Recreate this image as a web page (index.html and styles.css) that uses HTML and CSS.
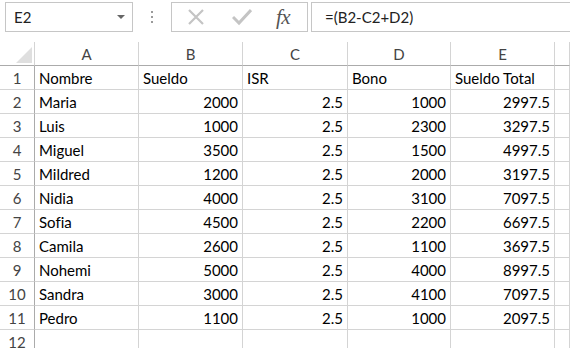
FILE: index.html
```html
<!DOCTYPE html>
<html lang="es">
<head>
  <meta charset="UTF-8" />
  <title>Hoja de sueldos</title>
  <link rel="stylesheet" href="styles.css">
</head>
<body>

  <!-- Barra de formulas -->
  <div class="formula-bar">
    <div class="name-box">
      <span>E2</span>
      <span class="caret"></span>
    </div>
    <div class="grip"><i></i><i></i><i></i></div>
    <div class="fx-box">
      <svg class="ico" width="18" height="18" viewBox="0 0 18 18">
        <path d="M2 2 L16 16 M16 2 L2 16" stroke="#c4c4c4" stroke-width="2.2" fill="none"/>
      </svg>
      <svg class="ico" width="20" height="18" viewBox="0 0 20 18">
        <path d="M1 9 L7 15 L19 2" stroke="#c4c4c4" stroke-width="3" fill="none"/>
      </svg>
      <span class="fx">fx</span>
    </div>
    <div class="formula-input">=(B2-C2+D2)</div>
  </div>

  <!-- Hoja -->
  <div class="sheet">
    <div class="cell corner"><span class="tri"></span></div>
    <div class="cell col-head">A</div>
    <div class="cell col-head">B</div>
    <div class="cell col-head">C</div>
    <div class="cell col-head">D</div>
    <div class="cell col-head">E</div>
    <div class="cell col-head"></div>

    <div class="cell row-head">1</div>
    <div class="cell">Nombre</div>
    <div class="cell">Sueldo</div>
    <div class="cell">ISR</div>
    <div class="cell">Bono</div>
    <div class="cell">Sueldo Total</div>
    <div class="cell"></div>
  </div>

  <script>
    const datos = [
      ["Maria", 2000, 1000, "2997.5"],
      ["Luis", 1000, 2300, "3297.5"],
      ["Miguel", 3500, 1500, "4997.5"],
      ["Mildred", 1200, 2000, "3197.5"],
      ["Nidia", 4000, 3100, "7097.5"],
      ["Sofia", 4500, 2200, "6697.5"],
      ["Camila", 2600, 1100, "3697.5"],
      ["Nohemi", 5000, 4000, "8997.5"],
      ["Sandra", 3000, 4100, "7097.5"],
      ["Pedro", 1100, 1000, "2097.5"]
    ];

    const hoja = document.querySelector(".sheet");
    let html = "";
    datos.forEach((d, i) => {
      html += `<div class="cell row-head">${i + 2}</div>`;
      html += `<div class="cell">${d[0]}</div>`;
      html += `<div class="cell num">${d[1]}</div>`;
      html += `<div class="cell num">2.5</div>`;
      html += `<div class="cell num">${d[2]}</div>`;
      html += `<div class="cell num">${d[3]}</div>`;
      html += `<div class="cell"></div>`;
    });
    html += `<div class="cell row-head">12</div>`;
    for (let c = 0; c < 6; c++) html += `<div class="cell"></div>`;
    hoja.insertAdjacentHTML("beforeend", html);
  </script>
</body>
</html>
```

FILE: styles.css
```css
html, body {
  margin: 0;
  padding: 0;
  background-color: #ffffff;
  font-family: Lato, "Open Sans", sans-serif;
  font-variant-ligatures: none;
  overflow: hidden;
}

.formula-bar {
  display: flex;
  align-items: flex-start;
  height: 42px;
  padding: 2px 0 10px 5px;
  box-sizing: border-box;
}

.name-box {
  width: 128px;
  height: 30px;
  box-sizing: border-box;
  border: 1px solid #c6c6c6;
  display: flex;
  align-items: center;
  justify-content: space-between;
  padding: 0 7px 0 8px;
  font-size: 15px;
  color: #222;
}

.caret {
  width: 0;
  height: 0;
  border-left: 4px solid transparent;
  border-right: 4px solid transparent;
  border-top: 4px solid #666;
}

.grip {
  width: 38px;
  height: 30px;
  display: flex;
  flex-direction: column;
  align-items: center;
  justify-content: center;
  gap: 3px;
}

.grip i {
  width: 2px;
  height: 2px;
  background: #9a9a9a;
}

.fx-box {
  width: 137px;
  height: 30px;
  box-sizing: border-box;
  border: 1px solid #c6c6c6;
  display: flex;
  align-items: center;
  padding-left: 15px;
  gap: 27px;
}

.fx {
  font-family: "Liberation Serif", "DejaVu Serif", serif;
  font-style: italic;
  font-size: 21px;
  color: #555;
  margin-left: -3px;
  letter-spacing: -0.5px;
}

.formula-input {
  flex: 1;
  height: 30px;
  box-sizing: border-box;
  margin-left: 3px;
  border: 1px solid #c6c6c6;
  border-right: none;
  display: flex;
  align-items: center;
  padding-left: 13px;
  font-size: 15px;
  color: #222;
}

.sheet {
  display: grid;
  grid-template-columns: 35px 104px 104px 105px 103px 104px 1fr;
  grid-auto-rows: 24px;
}

.cell {
  box-sizing: border-box;
  border-right: 1px solid #d4d4d4;
  border-bottom: 1px solid #d4d4d4;
  font-size: 15px;
  color: #000;
  display: flex;
  align-items: center;
  padding: 1px 4px 0 4px;
  white-space: nowrap;
  overflow: hidden;
}

.num {
  justify-content: flex-end;
}

.col-head {
  justify-content: center;
  color: #444;
  border-bottom-color: #ababab;
}

.row-head {
  justify-content: center;
  color: #444;
  border-right-color: #ababab;
  padding: 1px 0 0 0;
}

.corner {
  border-right-color: #d4d4d4;
  border-bottom-color: #ababab;
  align-items: flex-end;
  justify-content: flex-end;
  padding: 0 2px 2px 0;
}

.tri {
  width: 0;
  height: 0;
  border-left: 16px solid transparent;
  border-bottom: 16px solid #dfdfdf;
}
```
